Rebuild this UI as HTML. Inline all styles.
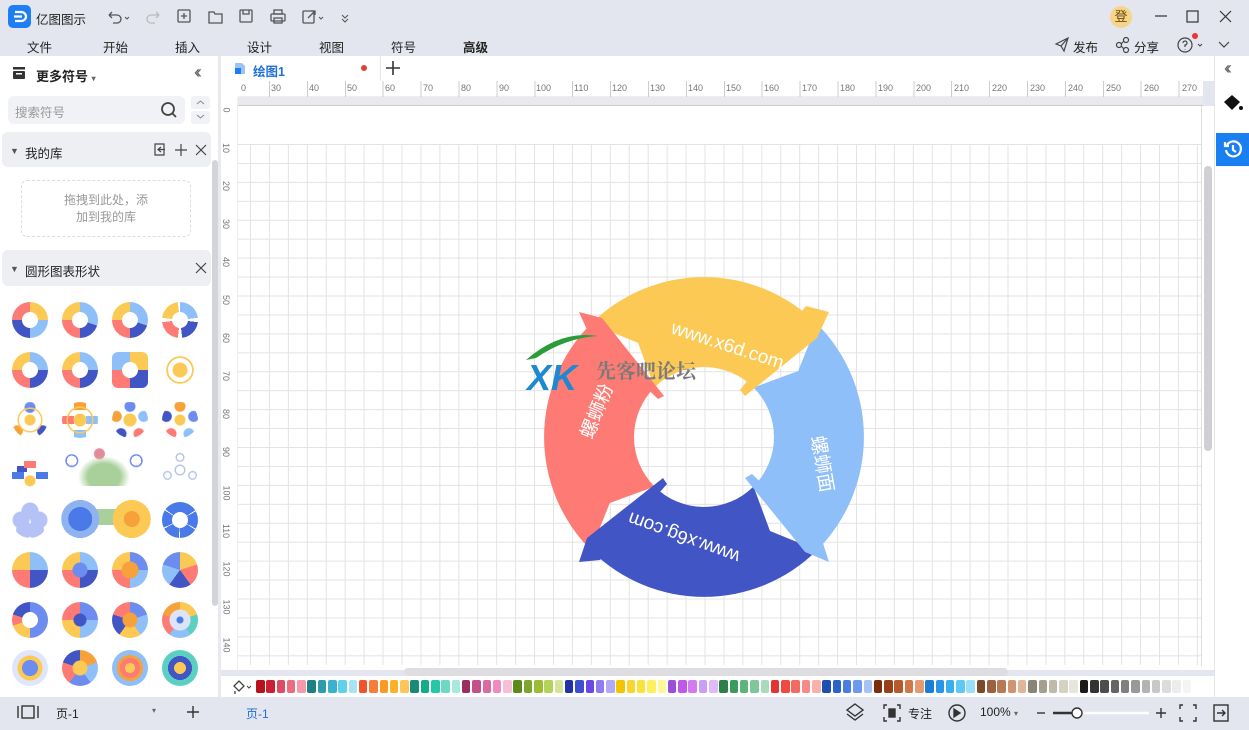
<!DOCTYPE html>
<html><head><meta charset="utf-8">
<style>
*{box-sizing:border-box;margin:0;padding:0}
body{width:1249px;height:730px;overflow:hidden;background:#e4e6ef;font-family:"Liberation Sans","Noto Sans CJK SC",sans-serif;font-size:12px;color:#222;position:relative}
.a{position:absolute}
.menu span{position:absolute;top:37px;font-size:12.5px;color:#222}
.th{position:absolute;width:36px;height:36px;border-radius:50%}
.th::after{content:"";position:absolute;left:10px;top:10px;width:16px;height:16px;border-radius:50%;background:#fff}
.pie::after{display:none}
.sw{display:inline-block;width:8.5px;height:13px;border-radius:2px;margin-right:1.8px}
</style></head><body>
<div class="a" style="left:8px;top:5px;width:23px;height:23px;border-radius:5px;background:#1e7ff5"></div>
<svg class="a" style="left:8px;top:5px" width="23" height="23"><path d="M7 7h6a5 4.5 0 0 1 0 9h-6M6 11.5h8" stroke="#fff" stroke-width="2.2" fill="none"/></svg>
<div class="a" style="left:36px;top:9px;font-size:12.5px">亿图图示</div>
<svg class="a" style="left:105px;top:7px" width="250" height="20" fill="none" stroke="#555" stroke-width="1.3">
<path d="M4 8h8a4 4 0 0 1 0 8h-4M4 8l3-3M4 8l3 3"/><path d="M20 10l2 2 2-2" stroke-width="1"/>
<path d="M54 8h-8a4 4 0 0 0 0 8h4M54 8l-3-3M54 8l-3 3" stroke="#bbb"/>
<rect x="73" y="3" width="12" height="12" rx="1"/><path d="M79 6v6M76 9h6"/>
<path d="M104 5h5l1 2h7v9h-13z"/>
<rect x="135" y="3" width="12" height="12" rx="1"/><path d="M138 3v4h6V3"/>
<rect x="166" y="7" width="14" height="7" rx="1"/><rect x="169" y="3" width="8" height="4"/><rect x="169" y="11" width="8" height="5"/>
<rect x="198" y="4" width="11" height="12" rx="1"/><path d="M203 11l7-7M206 4h4v4"/><path d="M214 10l2 2 2-2" stroke-width="1"/>
<path d="M237 8l3 3 3-3M237 12l3 3 3-3" stroke-width="1"/>
</svg>
<div class="a" style="left:1110px;top:6px;width:22px;height:22px;border-radius:50%;background:#f5d58a;font-size:13px;text-align:center;line-height:22px;color:#6b4a12">登</div>
<svg class="a" style="left:1150px;top:8px" width="95" height="18" stroke="#333" stroke-width="1.2" fill="none"><path d="M5 8h12"/><rect x="37" y="3" width="11" height="11"/><path d="M70 3l11 11M81 3L70 14"/></svg>
<div class="menu"><span style="left:27px">文件</span><span style="left:103px">开始</span><span style="left:175px">插入</span><span style="left:247px">设计</span><span style="left:319px">视图</span><span style="left:391px">符号</span><span style="left:463px;font-weight:bold">高级</span></div>
<svg class="a" style="left:1053px;top:36px" width="190" height="18" fill="none" stroke="#444" stroke-width="1.2">
<path d="M3 8l12-6-4 13-3-5z M8 10l7-8"/><circle cx="66" cy="9" r="2.5"/><circle cx="73" cy="4" r="2.5"/><circle cx="73" cy="14" r="2.5"/><path d="M68 8l3-3M68 10l3 3"/>
<circle cx="132" cy="9" r="7"/><path d="M130 7a2 2 0 1 1 2 2v2M132 13v.5"/><path d="M145 8l2 2 2-2" stroke-width="1"/><path d="M166 6l5 5 5-5"/></svg>
<div class="a" style="left:1073px;top:37px;font-size:12.5px">发布</div>
<div class="a" style="left:1134px;top:37px;font-size:12.5px">分享</div>
<div class="a" style="left:1192px;top:33px;width:6px;height:6px;border-radius:50%;background:#e33"></div>

<div class="a" style="left:0;top:56px;width:220px;height:641px;background:#fff"></div>
<svg class="a" style="left:12px;top:66px" width="14" height="14"><rect x="1" y="1" width="12" height="2.5" fill="#333"/><rect x="1" y="5" width="12" height="8" rx="1" fill="#333"/><rect x="4" y="7" width="6" height="1.5" fill="#fff"/></svg>
<div class="a" style="left:36px;top:66px;font-size:13px;font-weight:bold">更多符号 <span style="font-size:8px;color:#666">▾</span></div>
<div class="a" style="left:194px;top:62px;font-size:18px;color:#666;letter-spacing:-4px">‹‹</div>
<div class="a" style="left:8px;top:96px;width:177px;height:28px;border-radius:6px;background:#f1f2f6"></div>
<div class="a" style="left:15px;top:102px;font-size:12.5px;color:#999">搜索符号</div>
<svg class="a" style="left:160px;top:101px" width="18" height="18" fill="none" stroke="#444" stroke-width="1.8"><circle cx="8" cy="8" r="6"/><path d="M12.5 12.5l3.5 3.5"/></svg>
<div class="a" style="left:191px;top:96px;width:19px;height:13px;background:#f1f2f6;border-radius:3px"></div>
<div class="a" style="left:191px;top:111px;width:19px;height:13px;background:#f1f2f6;border-radius:3px"></div>
<svg class="a" style="left:191px;top:96px" width="19" height="28" fill="none" stroke="#888"><path d="M6 8l3.5-3 3.5 3M6 19l3.5 3 3.5-3"/></svg>
<div class="a" style="left:2px;top:132px;width:209px;height:35px;background:#eeeff3;border-radius:6px"></div>
<div class="a" style="left:10px;top:146px;font-size:9px;color:#555">▼</div>
<div class="a" style="left:25px;top:143px;font-size:12.5px">我的库</div>
<svg class="a" style="left:153px;top:142px" width="56" height="16" fill="none" stroke="#444" stroke-width="1.2"><path d="M2 2h9v11H2zM5 7.5h7M8 5l-3 2.5L8 10"/><path d="M28 2v12M22 8h12M43 3l10 10M53 3L43 13"/></svg>
<div class="a" style="left:21px;top:180px;width:170px;height:57px;border:1px dashed #ddd;border-radius:6px;text-align:center;color:#999;font-size:12px;line-height:17px;padding-top:11px">拖拽到此处，添<br>加到我的库</div>
<div class="a" style="left:2px;top:250px;width:209px;height:36px;background:#eeeff3;border-radius:6px"></div>
<div class="a" style="left:10px;top:264px;font-size:9px;color:#555">▼</div>
<div class="a" style="left:25px;top:261px;font-size:12.5px">圆形图表形状</div>
<svg class="a" style="left:195px;top:262px" width="12" height="12" stroke="#444" stroke-width="1.2"><path d="M1 1l10 10M11 1L1 11"/></svg>
<div class="a" style="left:212px;top:160px;width:6px;height:446px;background:#d3d4da;border-radius:3px"></div>
<div class="a" style="left:218px;top:56px;width:3px;height:641px;background:#e9eaef"></div>

<div class="th" style="left:12px;top:302px;background:conic-gradient(#fcc955 0 25%,#8fbff8 0 50%,#4255c4 0 75%,#fd7b74 0)"></div>
<div class="th" style="left:62px;top:302px;background:conic-gradient(#8fbff8 0 30%,#4255c4 0 50%,#fd7b74 0 75%,#fcc955 0)"></div>
<div class="th" style="left:112px;top:302px;background:conic-gradient(#8fbff8 0 30%,#4255c4 0 50%,#fd7b74 0 75%,#fcc955 0)"></div>
<div class="th" style="left:162px;top:302px;background:conic-gradient(#8fbff8 0 23%,#fff 0 27%,#4255c4 0 48%,#fff 0 52%,#fd7b74 0 73%,#fff 0 77%,#fcc955 0 98%,#fff 0)"></div>
<div class="th" style="left:12px;top:352px;background:conic-gradient(#8fbff8 0 25%,#4255c4 0 50%,#fd7b74 0 75%,#fcc955 0)"></div>
<div class="th" style="left:62px;top:352px;background:conic-gradient(#8fbff8 0 25%,#4255c4 0 50%,#fd7b74 0 75%,#fcc955 0)"></div>
<div class="th" style="left:112px;top:352px;border-radius:6px;background:conic-gradient(#fcc955 0 25%,#4255c4 0 50%,#fd7b74 0 75%,#8fbff8 0)"></div>
<div class="th pie" style="left:162px;top:352px;background:radial-gradient(circle at 50% 50%,#fcc955 0 7px,transparent 8px),radial-gradient(circle,transparent 12px,#fcc955 12px 13.5px,transparent 14px)"></div>
<div class="th pie" style="left:12px;top:402px;background:radial-gradient(circle,#fcc955 0 5px,transparent 6px 11px,#fcc955 11px 12px,transparent 13px),radial-gradient(circle at 50% 15%,#6c8cf0 0 5px,transparent 6px),radial-gradient(circle at 15% 80%,#f7a13a 0 5px,transparent 6px),radial-gradient(circle at 85% 80%,#4255c4 0 5px,transparent 6px)"></div>
<div class="th pie" style="left:62px;top:402px;background:radial-gradient(circle,#fcc955 0 6px,transparent 7px 12px,#fcc955 12px 13px,transparent 14px),linear-gradient(#f7a13a,#f7a13a) 50% 0/12px 8px no-repeat,linear-gradient(#fd7b74,#fd7b74) 0 50%/12px 8px no-repeat,linear-gradient(#8fbff8,#8fbff8) 100% 50%/12px 8px no-repeat,linear-gradient(#8fbff8,#8fbff8) 50% 100%/12px 8px no-repeat"></div>
<div class="th pie" style="left:112px;top:402px;background:radial-gradient(circle,#fcc955 0 6px,transparent 7px),radial-gradient(circle at 50% 12%,#6c8cf0 0 5px,transparent 6px),radial-gradient(circle at 12% 40%,#f7a13a 0 5px,transparent 6px),radial-gradient(circle at 88% 40%,#8fbff8 0 5px,transparent 6px),radial-gradient(circle at 25% 88%,#4255c4 0 5px,transparent 6px),radial-gradient(circle at 75% 88%,#fd7b74 0 5px,transparent 6px)"></div>
<div class="th pie" style="left:162px;top:402px;background:radial-gradient(circle,#fcc955 0 5px,transparent 6px),radial-gradient(circle at 50% 12%,#f7a13a 0 5px,transparent 6px),radial-gradient(circle at 12% 40%,#4255c4 0 5px,transparent 6px),radial-gradient(circle at 88% 40%,#6c8cf0 0 5px,transparent 6px),radial-gradient(circle at 25% 88%,#fd7b74 0 5px,transparent 6px),radial-gradient(circle at 75% 88%,#8fbff8 0 5px,transparent 6px)"></div>
<div class="th pie" style="left:12px;top:452px;border-radius:0;background:radial-gradient(circle at 50% 80%,#fcc955 0 5px,transparent 6px),linear-gradient(#fd7b74,#fd7b74) 50% 30%/12px 7px no-repeat,linear-gradient(#4a79e8,#4a79e8) 0 70%/12px 7px no-repeat,linear-gradient(#4a79e8,#4a79e8) 100% 70%/12px 7px no-repeat,linear-gradient(#4255c4,#4255c4) 20% 45%/10px 6px no-repeat"></div>
<div class="a" style="left:58px;top:440px;width:92px;height:46px;background:radial-gradient(ellipse at 50% 80%,#a9cf9a 0 25%,transparent 40%),radial-gradient(circle at 15% 45%,transparent 5px,#6c8cf0 5px 6px,transparent 7px),radial-gradient(circle at 85% 45%,transparent 5px,#6c8cf0 5px 6px,transparent 7px),radial-gradient(circle at 45% 30%,#e58a9a 0 5px,transparent 6px)"></div>
<div class="th pie" style="left:162px;top:452px;background:radial-gradient(circle,transparent 4px,#b9c4e8 4px 5px,transparent 6px),radial-gradient(circle at 50% 15%,transparent 3px,#b9c4e8 3px 4px,transparent 5px),radial-gradient(circle at 15% 65%,transparent 3px,#b9c4e8 3px 4px,transparent 5px),radial-gradient(circle at 85% 65%,transparent 3px,#b9c4e8 3px 4px,transparent 5px)"></div>
<div class="th pie" style="left:12px;top:502px;background:radial-gradient(circle at 50% 25%,#b5c2f5 0 8px,transparent 9px),radial-gradient(circle at 25% 50%,#b5c2f5 0 8px,transparent 9px),radial-gradient(circle at 75% 50%,#b5c2f5 0 8px,transparent 9px),radial-gradient(circle at 35% 78%,#b5c2f5 0 8px,transparent 9px),radial-gradient(circle at 65% 78%,#b5c2f5 0 8px,transparent 9px)"></div>
<div class="a" style="left:60px;top:500px;width:92px;height:38px;background:radial-gradient(circle at 22% 50%,#4a79e8 0 12px,#8fb3f0 12px 19px,transparent 19px),radial-gradient(circle at 78% 50%,#f7a13a 0 8px,#fcc955 8px 19px,transparent 19px),linear-gradient(#a9cf9a,#a9cf9a) 50% 40%/80px 16px no-repeat"></div>
<div class="th" style="left:162px;top:502px;background:conic-gradient(#4a79e8 0 16%,#fff 0 17%,#4a79e8 0 33%,#fff 0 34%,#4a79e8 0 50%,#fff 0 51%,#4a79e8 0 67%,#fff 0 68%,#4a79e8 0 84%,#fff 0 85%,#4a79e8 0)"></div>
<div class="th pie" style="left:12px;top:552px;background:conic-gradient(#8fbff8 0 25%,#4255c4 0 50%,#fd7b74 0 75%,#fcc955 0)"></div>
<div class="th pie" style="left:62px;top:552px;background:radial-gradient(circle,#6c8cf0 0 7px,transparent 8px),conic-gradient(#8fbff8 0 25%,#4255c4 0 50%,#fd7b74 0 75%,#fcc955 0)"></div>
<div class="th pie" style="left:112px;top:552px;background:radial-gradient(circle,#f7a13a 0 8px,transparent 9px),conic-gradient(#6c8cf0 0 25%,#8fbff8 0 50%,#fd7b74 0 75%,#fcc955 0)"></div>
<div class="th pie" style="left:162px;top:552px;background:conic-gradient(#fcc955 0 20%,#fd7b74 0 40%,#4255c4 0 60%,#8fbff8 0 80%,#6c8cf0 0)"></div>
<div class="th" style="left:12px;top:602px;background:conic-gradient(#6c8cf0 0 50%,#fcc955 0 70%,#fd7b74 0 80%,#4255c4 0)"></div>
<div class="th pie" style="left:62px;top:602px;background:radial-gradient(circle,#4255c4 0 6px,transparent 7px),conic-gradient(#6c8cf0 0 25%,#8fbff8 0 50%,#fcc955 0 75%,#fd7b74 0)"></div>
<div class="th pie" style="left:112px;top:602px;background:radial-gradient(circle,#f7a13a 0 7px,transparent 8px),conic-gradient(#6c8cf0 0 20%,#8fbff8 0 40%,#fcc955 0 60%,#4255c4 0 80%,#fd7b74 0)"></div>
<div class="th pie" style="left:162px;top:602px;background:radial-gradient(circle,#4a79e8 0 3px,#dde4f8 4px 10px,transparent 11px),conic-gradient(#fcc955 0 20%,#5bd0c0 0 40%,#8fbff8 0 60%,#fd7b74 0 80%,#f7a13a 0)"></div>
<div class="th pie" style="left:12px;top:650px;background:radial-gradient(circle,#6c8cf0 0 8px,#fcc955 8px 12px,#dfe5fb 13px)"></div>
<div class="th pie" style="left:62px;top:650px;background:radial-gradient(circle,#fcc955 0 7px,transparent 8px),conic-gradient(#f7a13a 0 20%,#8fbff8 0 40%,#6c8cf0 0 60%,#fd7b74 0 80%,#4255c4 0)"></div>
<div class="th pie" style="left:112px;top:650px;background:radial-gradient(circle,#fcc955 0 5px,#fd7b74 5px 10px,#f7a13a 10px 13px,#8fbff8 13px)"></div>
<div class="th pie" style="left:162px;top:650px;background:radial-gradient(circle,#fcc955 0 6px,#4255c4 6px 12px,#5bd0c0 12px)"></div>

<div class="a" style="left:221px;top:56px;width:993px;height:25px;background:#fff"></div>
<svg class="a" style="left:234px;top:61px" width="12" height="14"><path d="M1 2h7l3 3v8H1z" fill="#9ec3f5"/><rect x="1" y="7" width="6" height="6" fill="#1e7ff5"/></svg>
<div class="a" style="left:253px;top:61px;font-size:12.5px;color:#1e6fd9;font-weight:bold">绘图1</div>
<div class="a" style="left:361px;top:65px;width:6px;height:6px;border-radius:50%;background:#e0413a"></div>
<div class="a" style="left:380px;top:56px;width:1px;height:25px;background:#e6e6e6"></div>
<svg class="a" style="left:386px;top:61px" width="14" height="14" stroke="#333" stroke-width="1.6"><path d="M7 0v14M0 7h14"/></svg>

<div class="a" style="left:221px;top:81px;width:982px;height:589px;background:#fff"></div>
<div class="a" style="left:238px;top:81px;width:965px;height:16px;background:#fff;border-bottom:1px solid #eee;font-size:9px;color:#777">
<span class="a" style="left:3px;top:2px">0</span><span class="a" style="left:33px;top:2px">30</span><span class="a" style="left:71px;top:2px">40</span><span class="a" style="left:109px;top:2px">50</span><span class="a" style="left:147px;top:2px">60</span><span class="a" style="left:185px;top:2px">70</span><span class="a" style="left:223px;top:2px">80</span><span class="a" style="left:261px;top:2px">90</span><span class="a" style="left:298px;top:2px">100</span><span class="a" style="left:336px;top:2px">110</span><span class="a" style="left:374px;top:2px">120</span><span class="a" style="left:412px;top:2px">130</span><span class="a" style="left:450px;top:2px">140</span><span class="a" style="left:488px;top:2px">150</span><span class="a" style="left:526px;top:2px">160</span><span class="a" style="left:564px;top:2px">170</span><span class="a" style="left:602px;top:2px">180</span><span class="a" style="left:640px;top:2px">190</span><span class="a" style="left:678px;top:2px">200</span><span class="a" style="left:716px;top:2px">210</span><span class="a" style="left:754px;top:2px">220</span><span class="a" style="left:792px;top:2px">230</span><span class="a" style="left:830px;top:2px">240</span><span class="a" style="left:868px;top:2px">250</span><span class="a" style="left:906px;top:2px">260</span><span class="a" style="left:944px;top:2px">270</span>
</div>
<div class="a" style="left:238px;top:81px;width:965px;height:16px;background:repeating-linear-gradient(90deg,#ccc 0 1px,transparent 1px 37.9px) 31px 100%/100% 16px no-repeat"></div>
<div class="a" style="left:238px;top:97px;width:965px;height:9px;background:#e9e9ee;border-bottom:1px solid #ccc"></div>
<div class="a" style="left:221px;top:97px;width:17px;height:573px;border-right:1px solid #eee;font-size:9px;color:#777">
<span class="a" style="left:3px;top:8px;transform:rotate(90deg)">0</span><span class="a" style="left:0;top:46px;transform:rotate(90deg)">10</span><span class="a" style="left:0;top:84px;transform:rotate(90deg)">20</span><span class="a" style="left:0;top:122px;transform:rotate(90deg)">30</span><span class="a" style="left:0;top:160px;transform:rotate(90deg)">40</span><span class="a" style="left:0;top:198px;transform:rotate(90deg)">50</span><span class="a" style="left:0;top:236px;transform:rotate(90deg)">60</span><span class="a" style="left:0;top:274px;transform:rotate(90deg)">70</span><span class="a" style="left:0;top:312px;transform:rotate(90deg)">80</span><span class="a" style="left:0;top:350px;transform:rotate(90deg)">90</span><span class="a" style="left:-2px;top:391px;transform:rotate(90deg)">100</span><span class="a" style="left:-2px;top:429px;transform:rotate(90deg)">110</span><span class="a" style="left:-2px;top:467px;transform:rotate(90deg)">120</span><span class="a" style="left:-2px;top:505px;transform:rotate(90deg)">130</span><span class="a" style="left:-2px;top:543px;transform:rotate(90deg)">140</span>
</div>
<div class="a" style="left:238px;top:144px;width:963px;height:521px;background-image:linear-gradient(90deg,#e3e3e3 1px,transparent 1px),linear-gradient(#e3e3e3 1px,transparent 1px);background-size:18.95px 18.95px;background-position:12px 0"></div>
<div class="a" style="left:1201px;top:106px;width:1px;height:560px;background:#ddd"></div>

<svg class="a" style="left:0;top:0" width="1249" height="730">
<path d="M817.1,323.9 A160,160 0 0 1 817.1,550.1 L753.5,486.5 A70,70 0 0 0 753.5,387.5 L798.2,371 Z" fill="#8fbff8"/>
<path d="M817.1,550.1 A160,160 0 0 1 590.9,550.1 L654.5,486.5 A70,70 0 0 0 753.5,486.5 L770,531 Z" fill="#4255c4"/>
<path d="M590.9,550.1 A160,160 0 0 1 590.9,323.9 L654.5,387.5 A70,70 0 0 0 654.5,486.5 L609.8,503 Z" fill="#fd7b74"/>
<path d="M590.9,323.9 A160,160 0 0 1 817.1,323.9 L753.5,387.5 A70,70 0 0 0 654.5,387.5 L638,342.8 Z" fill="#fcc955"/>
<path d="M806,306 L829,312 L817,338 L745,396 L740,390 Z" fill="#fcc955"/>
<path d="M822,540 L829,562 L805,552 L745,478 L752,474 Z" fill="#8fbff8"/>
<path d="M600,560 L579,562 L587,538 L663,478 L667,484 Z" fill="#4255c4"/>
<path d="M588,332 L579,312 L602,318 L664,396 L658,399 Z" fill="#fd7b74"/>
<g fill="#fff" font-family="Liberation Sans,sans-serif" font-size="19">
<text x="0" y="0" transform="translate(670,333) rotate(18)">www.x6d.com</text>
<text x="0" y="0" transform="translate(741,552) rotate(200)">www.x6g.com</text>
</g>
<g fill="#fff" font-family="Noto Sans CJK SC,sans-serif" font-size="19">
<text x="0" y="0" transform="translate(592,440) rotate(-68)">螺蛳粉</text>
<text x="0" y="0" transform="translate(811,437) rotate(80)">螺蛳面</text>
</g>
<path d="M526,360 Q560,330 598,336 Q565,338 536,358 Z" fill="#2a9d3a"/>
<text x="527" y="390" font-family="Liberation Sans,sans-serif" font-weight="bold" font-size="36" fill="#1e88d0" font-style="italic">XK</text>
<text x="596" y="378" font-family="Noto Serif CJK SC,serif" font-weight="bold" font-size="20" fill="#7a7a7a">先客吧论坛</text>
</svg>

<div class="a" style="left:1203px;top:106px;width:11px;height:564px;background:#fff"></div>
<div class="a" style="left:1204px;top:166px;width:8px;height:285px;background:#d0d0d4;border-radius:4px"></div>
<div class="a" style="left:404px;top:668px;width:604px;height:8px;background:#dedee2;border-radius:4px"></div>

<div class="a" style="left:221px;top:676px;width:993px;height:21px;background:#fff"></div>
<svg class="a" style="left:231px;top:679px" width="22" height="16" fill="none" stroke="#444" stroke-width="1.3"><path d="M3 7l5-5 5 5-5 5zM4 12v3"/><path d="M16 7l2 2 2-2" stroke-width="1"/></svg>
<div class="a" style="left:256px;top:680px;width:960px;white-space:nowrap;font-size:0">
<span class="sw" style="background:#b5121b"></span><span class="sw" style="background:#cc1e35"></span><span class="sw" style="background:#df4b62"></span><span class="sw" style="background:#ec6c80"></span><span class="sw" style="background:#f69aab"></span><span class="sw" style="background:#1f7f86"></span><span class="sw" style="background:#2e9bb0"></span><span class="sw" style="background:#3ab2cf"></span><span class="sw" style="background:#5fd1ea"></span><span class="sw" style="background:#a6e3f5"></span><span class="sw" style="background:#f0542a"></span><span class="sw" style="background:#f57d39"></span><span class="sw" style="background:#fb9a22"></span><span class="sw" style="background:#fdb127"></span><span class="sw" style="background:#fdc65a"></span><span class="sw" style="background:#1a8a78"></span><span class="sw" style="background:#14ab8a"></span><span class="sw" style="background:#26c7a6"></span><span class="sw" style="background:#6fd8c4"></span><span class="sw" style="background:#a7eadd"></span><span class="sw" style="background:#9a2e60"></span><span class="sw" style="background:#c4508a"></span><span class="sw" style="background:#dc6aa2"></span><span class="sw" style="background:#f08bbf"></span><span class="sw" style="background:#f5bfd9"></span><span class="sw" style="background:#5c8a1a"></span><span class="sw" style="background:#7ea52e"></span><span class="sw" style="background:#9cbd33"></span><span class="sw" style="background:#b5d25a"></span><span class="sw" style="background:#d4e59a"></span><span class="sw" style="background:#2232a8"></span><span class="sw" style="background:#3d4fd0"></span><span class="sw" style="background:#6a48e8"></span><span class="sw" style="background:#8e7cf0"></span><span class="sw" style="background:#b3a8f6"></span><span class="sw" style="background:#f5c400"></span><span class="sw" style="background:#fbd431"></span><span class="sw" style="background:#fbe238"></span><span class="sw" style="background:#fdf05c"></span><span class="sw" style="background:#fdf79a"></span><span class="sw" style="background:#9b4fd8"></span><span class="sw" style="background:#c05ae6"></span><span class="sw" style="background:#d17bef"></span><span class="sw" style="background:#c89ff6"></span><span class="sw" style="background:#e1b8f8"></span><span class="sw" style="background:#2b7f47"></span><span class="sw" style="background:#3b9b5b"></span><span class="sw" style="background:#5db37a"></span><span class="sw" style="background:#7fc699"></span><span class="sw" style="background:#a9dbbb"></span><span class="sw" style="background:#e3342f"></span><span class="sw" style="background:#ee4a40"></span><span class="sw" style="background:#f26b62"></span><span class="sw" style="background:#f68a84"></span><span class="sw" style="background:#f9b1ad"></span><span class="sw" style="background:#1d4fb0"></span><span class="sw" style="background:#2d62c8"></span><span class="sw" style="background:#4a7de0"></span><span class="sw" style="background:#6e9aee"></span><span class="sw" style="background:#a8c2f4"></span><span class="sw" style="background:#7a2e0c"></span><span class="sw" style="background:#98401a"></span><span class="sw" style="background:#b45a2c"></span><span class="sw" style="background:#d0784a"></span><span class="sw" style="background:#e69a72"></span><span class="sw" style="background:#1b7dd6"></span><span class="sw" style="background:#2995e6"></span><span class="sw" style="background:#3aaef0"></span><span class="sw" style="background:#5ccaf5"></span><span class="sw" style="background:#9adef8"></span><span class="sw" style="background:#7a4b2a"></span><span class="sw" style="background:#9a6240"></span><span class="sw" style="background:#b87a52"></span><span class="sw" style="background:#d09470"></span><span class="sw" style="background:#e2b596"></span><span class="sw" style="background:#8a8478"></span><span class="sw" style="background:#a59f90"></span><span class="sw" style="background:#beb9aa"></span><span class="sw" style="background:#d6d2c2"></span><span class="sw" style="background:#e8e5da"></span><span class="sw" style="background:#1a1a1a"></span><span class="sw" style="background:#333"></span><span class="sw" style="background:#4d4d4d"></span><span class="sw" style="background:#666"></span><span class="sw" style="background:#808080"></span><span class="sw" style="background:#999"></span><span class="sw" style="background:#b3b3b3"></span><span class="sw" style="background:#c8c8c8"></span><span class="sw" style="background:#dcdcdc"></span><span class="sw" style="background:#ececec"></span><span class="sw" style="background:#f4f4f4"></span>
</div>

<div class="a" style="left:1214px;top:56px;width:35px;height:641px;background:#fff;border-left:1px solid #e6e6ea"></div>
<div class="a" style="left:1224px;top:58px;font-size:18px;color:#666;letter-spacing:-4px">‹‹</div>
<svg class="a" style="left:1222px;top:93px" width="22" height="20"><path d="M2 9l8-7 8 7-8 8z" fill="#111"/><path d="M5 9h12l-7 7z" fill="#111"/><circle cx="19" cy="15" r="2" fill="#111"/></svg>
<div class="a" style="left:1216px;top:133px;width:33px;height:33px;background:#1a7ff0"></div>
<svg class="a" style="left:1223px;top:139px" width="20" height="20" fill="none" stroke="#fff" stroke-width="2.2"><path d="M4 6a7.5 7.5 0 1 1-1 5"/><path d="M2 3v4h4" /><path d="M10 6v5l3 2"/></svg>

<svg class="a" style="left:17px;top:704px" width="22" height="16" fill="none" stroke="#333" stroke-width="1.4"><rect x="5" y="2" width="12" height="12"/><path d="M1 2v12M21 2v12"/></svg>
<div class="a" style="left:56px;top:705px;font-size:12px">页-1</div>
<div class="a" style="left:152px;top:706px;font-size:8px;color:#666">▾</div>
<svg class="a" style="left:187px;top:706px" width="12" height="12" stroke="#333" stroke-width="1.4"><path d="M6 0v12M0 6h12"/></svg>
<div class="a" style="left:246px;top:705px;font-size:12px;color:#1e6fd9">页-1</div>
<svg class="a" style="left:845px;top:702px" width="390" height="22" fill="none" stroke="#333" stroke-width="1.4">
<path d="M10 2l8 6-8 6-8-6z"/><path d="M2 12l8 6 8-6"/>
<path d="M42 3h-3v4M52 3h3v4M42 19h-3v-4M52 19h3v-4"/><rect x="44" y="7" width="6" height="8" fill="#333"/>
<circle cx="112" cy="11" r="8"/><path d="M109 7v8l6-4z" fill="#333"/>
<path d="M192 11h8"/><path d="M208 11h22" stroke-width="2.5"/><path d="M230 11h74" stroke="#fff" stroke-width="2.5"/><circle cx="232" cy="11" r="5" fill="#fff"/>
<path d="M311 11h10M316 6v10"/>
<path d="M338 3h-3v4M348 3h3v4M338 19h-3v-4M348 19h3v-4"/>
<rect x="369" y="3" width="14" height="16"/><path d="M372 11h8M377 8l3 3-3 3"/>
</svg>
<div class="a" style="left:908px;top:705px;font-size:12px">专注</div>
<div class="a" style="left:980px;top:705px;font-size:12px">100% <span style="font-size:8px;color:#666">▾</span></div>
</body></html>
